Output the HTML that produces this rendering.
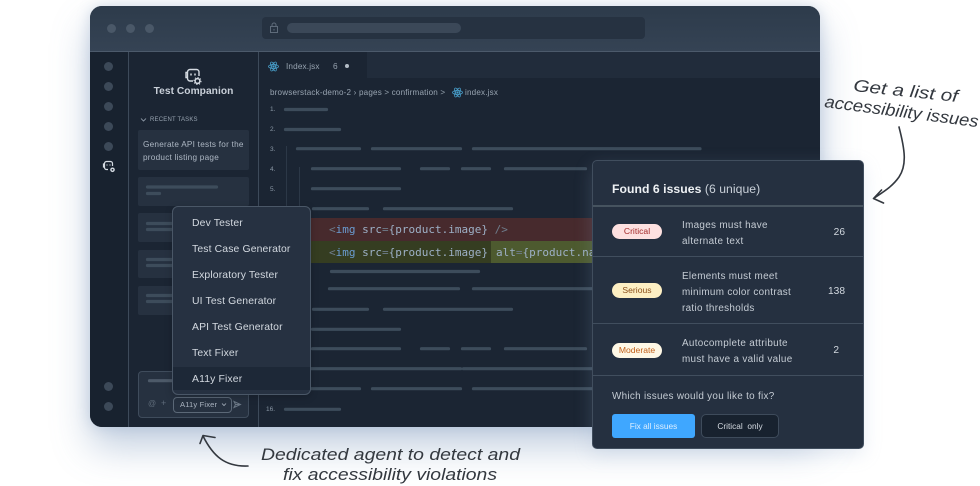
<!DOCTYPE html>
<html><head><meta charset="utf-8">
<style>
html,body{margin:0;padding:0;background:#fff}
body{width:980px;height:486px;position:relative;overflow:hidden;font-family:"Liberation Sans",sans-serif}
.a{position:absolute;white-space:nowrap}
.win{left:90px;top:6px;width:730px;height:421px;border-radius:12px;background:#1b2533;box-shadow:0 20px 38px rgba(110,140,180,.42),0 0 14px rgba(110,140,180,.28)}
.top{left:90px;top:6px;width:730px;height:45px;border-radius:12px 12px 0 0;background:linear-gradient(180deg,#2d3b4b,#354354)}
.mn{font-family:"DejaVu Sans Mono","Liberation Mono",monospace;font-size:11px;color:#9db0c6}
.dd{left:172px;top:206px;width:137px;height:187px;background:#263141;border:1px solid #4a5767;border-radius:6px;overflow:hidden;box-shadow:0 2px 8px rgba(0,0,0,.2)}
.it{left:192px;color:#d3d9e0;font-size:10.4px;letter-spacing:.14px;line-height:14px}
.rp{left:592px;top:160px;width:270px;height:287px;background:#253040;border:1px solid #414e5e;border-radius:5px;box-shadow:0 6px 18px rgba(150,175,205,.22)}
.hr{left:593px;width:270px;height:1px;background:#414e5e}
.pill{left:612px;width:50px;height:15px;border-radius:8px;text-align:center;font-size:8.6px;line-height:15px}
.tx{left:682px;color:#c5ccd4;font-size:9.9px;letter-spacing:.32px;line-height:16px}
.ct{color:#d3d9e0;font-size:10.2px;line-height:14px;text-align:right;left:800px;width:45px}
.ln{font-size:6.5px;color:#8996a4;line-height:8px}
.dot{width:9px;height:9px;border-radius:50%;background:#3c4958}
.card{left:138px;width:111px;background:#263140;border-radius:2px}
</style></head>
<body>
<div class="a win"></div>
<div class="a top"></div>
<div class="a" style="left:90px;top:51px;width:730px;height:1px;background:#4c5a6b"></div>
<div class="a dot" style="left:107px;top:24px;background:#4a5868"></div>
<div class="a dot" style="left:126px;top:24px;background:#4a5868"></div>
<div class="a dot" style="left:145px;top:24px;background:#4a5868"></div>
<div class="a" style="left:262px;top:17px;width:383px;height:22px;border-radius:4px;background:#263241"></div>
<div class="a" style="left:287px;top:23px;width:174px;height:10px;border-radius:5px;background:#3b4858"></div>
<svg class="a" style="left:269px;top:22px" width="10" height="12" viewBox="0 0 10 12" fill="none" stroke="#5e6b7a"><rect x="1.500" y="4.500" width="7" height="6"/><path d="M3 4.500V3a2 2 0 0 1 4 0v1.500"/><path d="M5 7v1.500"/></svg>

<div class="a" style="left:90px;top:52px;width:38px;height:375px;background:#18222f;border-radius:0 0 0 12px"></div>
<div class="a" style="left:128px;top:52px;width:1px;height:375px;background:#3d4a5a"></div>
<div class="a" style="left:258px;top:52px;width:1px;height:375px;background:#3d4a5a"></div>
<div class="a dot" style="left:104px;top:62px"></div>
<div class="a dot" style="left:104px;top:82px"></div>
<div class="a dot" style="left:104px;top:102px"></div>
<div class="a dot" style="left:104px;top:122px"></div>
<div class="a dot" style="left:104px;top:142px"></div>
<div class="a dot" style="left:104px;top:382px"></div>
<div class="a dot" style="left:104px;top:402px"></div>
<svg class="a" style="left:102px;top:160px" width="14" height="13" viewBox="0 0 14 13" fill="none" stroke="#d5dbe2" stroke-width="1.200"><path d="M6 9.500H4.500A2 2 0 0 1 2.500 7.500V3.500a2 2 0 0 1 2-2h4a2 2 0 0 1 2 2V6"/><path d="M2.500 4H1.500v3h1M5 4.500v1M8 4.500v1"/><circle cx="10.500" cy="9.800" r="1.600" stroke-width="1.400"/></svg>
<svg class="a" style="left:185px;top:68px" width="17" height="18" viewBox="0 0 17 18" fill="none" stroke="#d5dbe2" stroke-width="1.400"><path d="M8 13H5a2.500 2.500 0 0 1-2.500-2.500V4A2.500 2.500 0 0 1 5 1.500h6.500A2.500 2.500 0 0 1 14 4v4"/><path d="M2.500 4.500H1v5h1.500"/><path d="M6 5.500v2M10 5.500v2" stroke-width="1.500"/><circle cx="12.500" cy="13" r="2.400" stroke-width="1.500"/><circle cx="12.500" cy="13" r="3.600" stroke-width=".9" stroke-dasharray="1.300 1.500"/></svg>

<div class="a" style="left:129px;top:85px;width:129px;text-align:center;color:#c9d0d9;font-size:10.200px;font-weight:bold;letter-spacing:.05px;line-height:14px">Test Companion</div>
<svg class="a" style="left:140px;top:117px" width="7" height="6" fill="none" stroke="#9aa6b3" stroke-width=".8"><path d="M1 1.500l2.500 2.500L6 1.500"/></svg>
<div class="a" style="left:150px;top:116px;color:#98a4b1;font-size:6px;letter-spacing:.2px;line-height:8px">RECENT TASKS</div>
<div class="a card" style="top:130px;height:40px"></div>
<div class="a" style="left:143px;top:138px;color:#aeb8c4;font-size:8.200px;letter-spacing:.25px;line-height:13px">Generate API tests for the<br>product listing page</div>
<div class="a card" style="top:177px;height:29px"></div>
<div class="a card" style="top:213px;height:29px"></div>
<div class="a card" style="top:250px;height:28px"></div>
<div class="a card" style="top:286px;height:29px"></div>
<div class="a" style="left:138px;top:371px;width:109px;height:45px;background:#263140;border:1px solid #3f4c5c;border-radius:4px"></div>

<!-- code area -->
<div class="a" style="left:367px;top:52px;width:453px;height:26px;background:#212c3b"></div>
<svg class="a" style="left:268px;top:61px" width="11" height="11" viewBox="0 0 22 22" fill="none" stroke="#4aa3d0" stroke-width="1.500"><ellipse cx="11" cy="11" rx="10" ry="4"/><ellipse cx="11" cy="11" rx="10" ry="4" transform="rotate(60 11 11)"/><ellipse cx="11" cy="11" rx="10" ry="4" transform="rotate(120 11 11)"/><circle cx="11" cy="11" r="1.500" fill="#4aa3d0"/></svg>
<div class="a" style="left:286px;top:61px;color:#97a3b0;font-size:8.200px;letter-spacing:.15px;line-height:11px">Index.jsx</div>
<div class="a" style="left:333px;top:61px;color:#97a3b0;font-size:8.300px;line-height:11px">6</div>
<div class="a" style="left:345px;top:64px;width:4px;height:4px;border-radius:50%;background:#b4bdc7"></div>
<div class="a" style="left:270px;top:87px;color:#98a4b1;font-size:8.100px;letter-spacing:.18px;line-height:11px">browserstack-demo-2 › pages &gt; confirmation &gt;</div>
<svg class="a" style="left:452px;top:87px" width="11" height="11" viewBox="0 0 22 22" fill="none" stroke="#4aa3d0" stroke-width="1.500"><ellipse cx="11" cy="11" rx="10" ry="4"/><ellipse cx="11" cy="11" rx="10" ry="4" transform="rotate(60 11 11)"/><ellipse cx="11" cy="11" rx="10" ry="4" transform="rotate(120 11 11)"/><circle cx="11" cy="11" r="1.500" fill="#4aa3d0"/></svg>
<div class="a" style="left:465px;top:87px;color:#98a4b1;font-size:8.100px;letter-spacing:.18px;line-height:11px">index.jsx</div>
<div class="a ln" style="left:270px;top:106px">1.</div>
<div class="a ln" style="left:270px;top:126px">2.</div>
<div class="a ln" style="left:270px;top:146px">3.</div>
<div class="a ln" style="left:270px;top:166px">4.</div>
<div class="a ln" style="left:270px;top:186px">5.</div>
<div class="a ln" style="left:266px;top:406px">16.</div>

<div class="a" style="left:286px;top:146px;width:1px;height:80px;background:#2c3847"></div>
<div class="a" style="left:299px;top:167px;width:1px;height:60px;background:#2c3847"></div>
<div class="a" style="left:259px;top:218px;width:561px;height:23px;background:#472a2d"></div>
<div class="a" style="left:259px;top:241px;width:561px;height:22px;background:#353d21"></div>
<div class="a" style="left:491px;top:241px;width:329px;height:22px;background:#4d5a2f"></div>
<div class="a mn" style="left:329px;top:222px;line-height:15px"><span style="color:#6f7d8c">&lt;</span><span style="color:#6a9bd0">img</span> src<span style="color:#6f7d8c">=</span>{product.image} <span style="color:#6f7d8c">/&gt;</span></div>
<div class="a mn" style="left:329px;top:245px;line-height:15px"><span style="color:#6f7d8c">&lt;</span><span style="color:#6a9bd0">img</span> src<span style="color:#6f7d8c">=</span>{product.image}<span style="margin-left:8px">alt</span><span style="color:#6f7d8c">=</span>{product.name}</div>

<svg class="a" style="left:0;top:0" width="980" height="486" fill="none" stroke="#3d4c5b" stroke-width="3.200" stroke-linecap="round">
<path d="M285.500 109.500H326.500M285.500 129.500H339.500M297.500 148.700H359.500M372.500 148.700H460.500M473.500 148.700H700M312.500 168.700H399.500M421.500 168.700H448.500M462.500 168.700H489.500M505.500 168.700H585.500M312.500 188.700H399.500M313.500 208.700H367.500M384.500 208.700H511.500M331.500 271.500H478.500M329.500 288.700H458.500M473.500 288.700H700M313.500 309.300H367.500M384.500 309.300H511.500M312.500 329.300H399.500M312.500 348.700H399.500M421.500 348.700H448.500M462.500 348.700H489.500M505.500 348.700H585.500M311.500 368.700H460.500M463.500 368.700H700M297.500 388.700H359.500M372.500 388.700H460.500M473.500 388.700H700M285.500 409.300H339.500"/>
<path d="M147.500 187H216.500M147.500 193.500H159.500M147.500 223.500H200M147.500 229.500H200M147.500 259.500H200M147.500 265.500H200M147.500 295.500H200M147.500 301.500H200"/>
<path d="M149.500 380.700H200" stroke="#4d5a69"/>
</svg>

<!-- input row -->
<div class="a" style="left:148px;top:399px;color:#5f6c7a;font-size:8px;line-height:10px">@</div>
<div class="a" style="left:161px;top:398px;color:#5f6c7a;font-size:9px;line-height:11px">+</div>
<div class="a" style="left:173px;top:397px;width:57px;height:14px;border:1px solid #5b6877;border-radius:4px;color:#a9b3bf;font-size:7.600px;line-height:14px;text-indent:6px;letter-spacing:.15px">A11y Fixer</div>
<svg class="a" style="left:221px;top:402px" width="6" height="5" fill="none" stroke="#a9b3bf" stroke-width=".8"><path d="M1 1.500l2 2 2-2"/></svg>
<svg class="a" style="left:233px;top:400px" width="9" height="9" fill="none" stroke="#6a7785" stroke-width="1"><path d="M1 1.500l6.500 3-6.500 3 1.500-3zM2.500 4.500h5"/></svg>

<!-- dropdown -->
<div class="a dd"><div class="a" style="left:0;top:160px;width:137px;height:23px;background:#1d2837"></div></div>
<div class="a it" style="top:217px">Dev Tester</div>
<div class="a it" style="top:243px">Test Case Generator</div>
<div class="a it" style="top:269px">Exploratory Tester</div>
<div class="a it" style="top:295px">UI Test Generator</div>
<div class="a it" style="top:321px">API Test Generator</div>
<div class="a it" style="top:347px">Text Fixer</div>
<div class="a it" style="top:373px">A11y Fixer</div>

<!-- issues panel -->
<div class="a rp"></div>
<div class="a" style="left:612px;top:181px;color:#eef1f4;font-size:12.200px;line-height:16px;letter-spacing:.05px"><b>Found 6 issues</b> <span style="color:#c9d0d8">(6 unique)</span></div>
<div class="a hr" style="top:205px;height:1.500px;background:#46535f"></div>
<div class="a hr" style="top:256px"></div>
<div class="a hr" style="top:323px"></div>
<div class="a hr" style="top:375px"></div>
<div class="a pill" style="top:224px;background:#fde0e0;color:#a32a2a">Critical</div>
<div class="a pill" style="top:283px;background:#fdefc3;color:#8a4f1a">Serious</div>
<div class="a pill" style="top:343px;background:#fff8e6;color:#c2601a">Moderate</div>
<div class="a tx" style="top:218px">Images must have<br>alternate text</div>
<div class="a tx" style="top:269px">Elements must meet<br>minimum color contrast<br>ratio thresholds</div>
<div class="a tx" style="top:336px">Autocomplete attribute<br>must have a valid value</div>
<div class="a ct" style="top:226px">26</div>
<div class="a ct" style="top:285px">138</div>
<div class="a ct" style="top:344px;width:39px">2</div>
<div class="a" style="left:612px;top:390px;color:#c5ccd4;font-size:9.900px;letter-spacing:.3px;line-height:14px">Which issues would you like to fix?</div>
<div class="a" style="left:612px;top:414px;width:83px;height:24px;border-radius:3px;background:#3fa7ff;color:#dceeff;font-size:8.300px;line-height:24px;text-align:center">Fix all issues</div>
<div class="a" style="left:701px;top:414px;width:76px;height:22px;border:1px solid #3e4b5b;border-radius:5px;background:#18222f;color:#d3d9e0;font-size:8.300px;line-height:22px;text-align:center;white-space:pre">Critical  only</div>

<!-- annotations -->
<svg class="a" style="left:0;top:0" width="980" height="486" fill="none" stroke="#33383f" stroke-width="1.600" stroke-linecap="round" stroke-linejoin="round">
<path d="M899 127C905 150 907 165 899 177C892 187 883 192 873.500 198.500M881.500 190L873.500 198.500L883.500 203"/>
<path d="M248 466C225 467 213 456 203 436M200 443.500L203 435.500L215 437.500"/>
<g fill="#33383f" stroke="none" font-family="'Liberation Sans',sans-serif" font-style="italic" font-size="17">
<text x="261" y="460" textLength="259" lengthAdjust="spacingAndGlyphs">Dedicated agent to detect and</text>
<text x="283" y="480" textLength="214" lengthAdjust="spacingAndGlyphs">fix accessibility violations</text>
<text transform="translate(853 91) rotate(6)" textLength="105" lengthAdjust="spacingAndGlyphs">Get a list of</text>
<text transform="translate(824 107) rotate(7.500)" textLength="155" lengthAdjust="spacingAndGlyphs">accessibility issues</text>
</g>
</svg>
</body></html>
